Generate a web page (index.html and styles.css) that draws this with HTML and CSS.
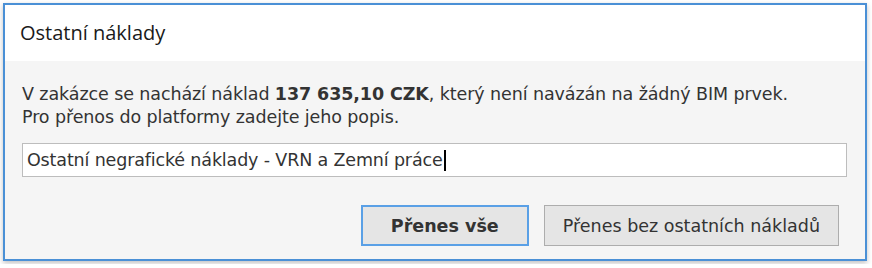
FILE: index.html
```html
<!doctype html>
<html>
<head>
<meta charset="utf-8">
<title>Ostatní náklady</title>
<link rel="stylesheet" href="styles.css">
</head>
<body>
<div class="dialog">
  <div class="title">Ostatní náklady</div>
  <div class="content">
    <p class="message">V zakázce se nachází náklad <strong>137 635,10 CZK</strong>, který není navázán na žádný BIM prvek.<br>Pro přenos do platformy zadejte jeho popis.</p>
    <div class="field"><span class="value">Ostatní negrafické náklady - VRN a Zemní práce</span><span class="caret"></span></div>
    <div class="buttons">
      <button class="btn default">Přenes vše</button>
      <button class="btn">Přenes bez ostatních nákladů</button>
    </div>
  </div>
</div>
</body>
</html>
```
FILE: styles.css
```css
body {
  margin: 0;
  background: #fff;
  font-family: "DejaVu Sans", sans-serif;
  color: #333;
}
.dialog {
  margin: 3px;
  width: 860px;
  height: 254px;
  border: 2px solid #4a90d6;
  background: #f5f5f5;
  box-shadow: 0 2px 5px rgba(0,0,0,0.25);
  display: flex;
  flex-direction: column;
}
.title {
  height: 56px;
  background: #fff;
  font-family: "Open Sans", sans-serif;
  font-size: 20px;
  color: #1a1a1a;
  line-height: 56px;
  padding-left: 15px;
}
.content {
  padding: 22px 18px 0 17px;
}
.message {
  margin: 0;
  font-size: 17.5px;
  line-height: 23px;
  letter-spacing: -0.1px;
}
.field {
  margin-top: 14px;
  height: 32px;
  border: 1px solid #bdbdbd;
  background: #fff;
  display: flex;
  align-items: center;
  padding-left: 4px;
  font-size: 17.5px;
  letter-spacing: -0.15px;
}
.caret {
  width: 2px;
  height: 21px;
  background: #000;
  margin-left: 1px;
}
.buttons {
  display: flex;
  justify-content: flex-end;
  gap: 15px;
  margin-top: 28px;
  padding-right: 8px;
}
.btn {
  height: 41px;
  border: 1px solid #adadad;
  background: #e5e5e5;
  font-family: "DejaVu Sans", sans-serif;
  font-size: 17.5px;
  color: #333;
  padding: 0 18px;
}
.btn.default {
  border: 2px solid #5aa0e6;
  font-weight: bold;
  width: 168px;
}
```
